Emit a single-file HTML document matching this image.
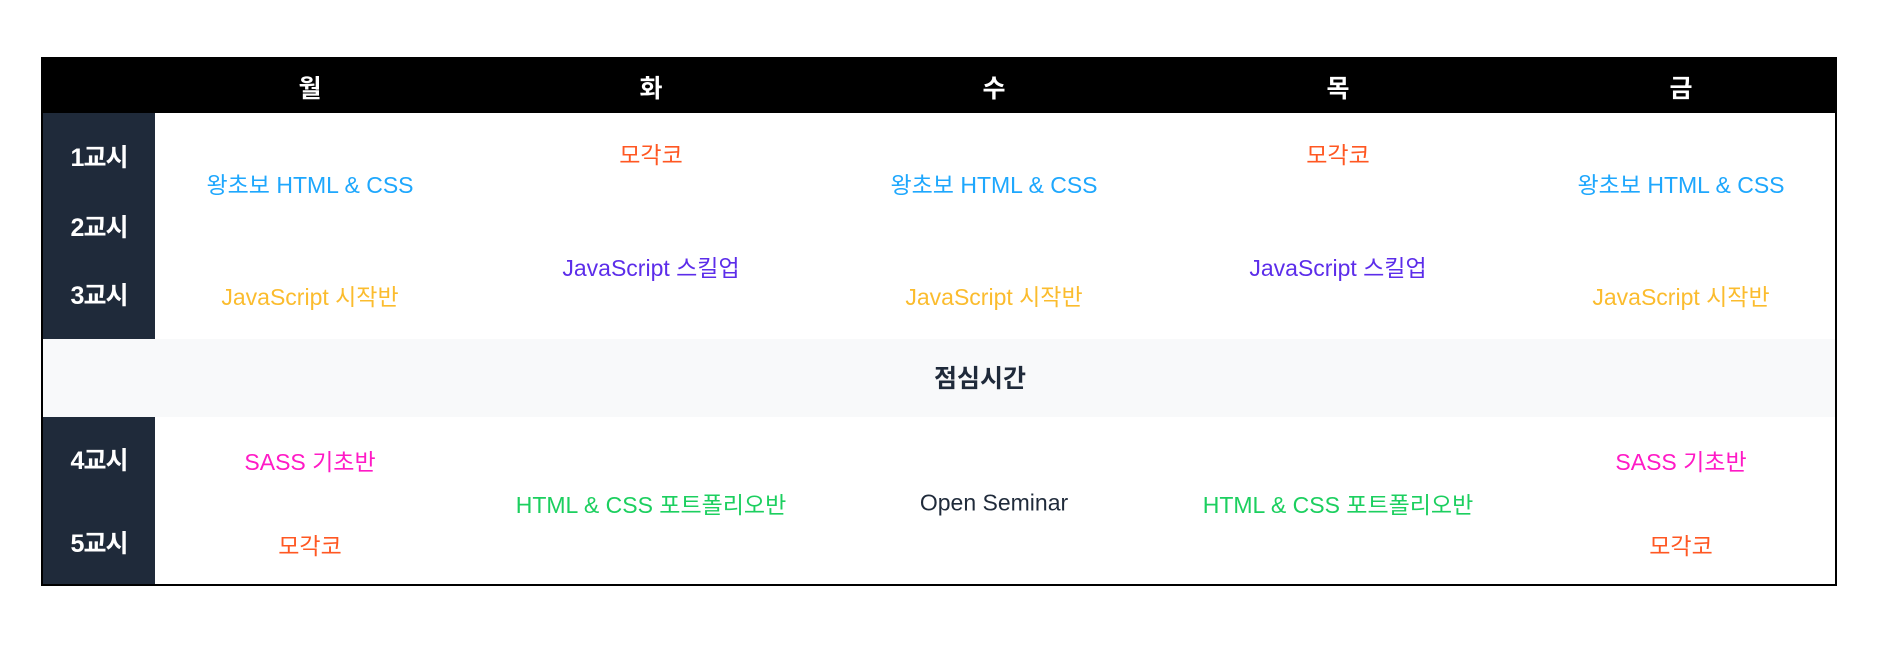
<!DOCTYPE html>
<html><head><meta charset="utf-8"><style>
body{margin:0;width:1880px;height:655px;background:#fff;position:relative;overflow:hidden;font-family:"Liberation Sans","Noto Sans CJK KR",sans-serif}
.box{position:absolute;left:41px;top:57px;width:1796px;height:529px;border:2px solid #000;box-sizing:border-box;background:#fff}
.hd{position:absolute;left:41px;top:57px;width:1796px;height:56px;background:#000}
.lab{position:absolute;left:43px;width:112px;background:#1f2a3a}
.lunch{position:absolute;left:43px;top:339px;width:1792px;height:78px;background:#f8f9fa}
.t{position:absolute;transform:translate(-50%,-50%);white-space:nowrap;font-size:23px}
.w{color:#fff;font-weight:bold;font-size:25px}
.l{color:#fff;font-weight:bold;font-size:25px;letter-spacing:-1px}
.b{color:#1ea7fd}.o{color:#ff5722}.p{color:#5c2dea}.y{color:#fbbc2e}.m{color:#ff1ac6}.g{color:#1ccf5f}.k{color:#1f2a3a}
</style></head><body>
<div class="box"></div>
<div class="hd"></div>
<div class="lab" style="top:113px;height:226px"></div>
<div class="lunch"></div>
<div class="lab" style="top:417px;height:167px"></div>

<div class="t w" style="left:310px;top:87px">월</div>
<div class="t w" style="left:651px;top:87px">화</div>
<div class="t w" style="left:994px;top:87px">수</div>
<div class="t w" style="left:1338px;top:87px">목</div>
<div class="t w" style="left:1681px;top:87px">금</div>

<div class="t l" style="left:99px;top:156px">1교시</div>
<div class="t l" style="left:99px;top:226px">2교시</div>
<div class="t l" style="left:99px;top:294px">3교시</div>
<div class="t l" style="left:99px;top:459px">4교시</div>
<div class="t l" style="left:99px;top:542px">5교시</div>

<div class="t b" style="left:310px;top:183px">왕초보 HTML &amp; CSS</div>
<div class="t y" style="left:310px;top:295px">JavaScript 시작반</div>
<div class="t o" style="left:651px;top:153px">모각코</div>
<div class="t p" style="left:651px;top:266px">JavaScript 스킬업</div>
<div class="t b" style="left:994px;top:183px">왕초보 HTML &amp; CSS</div>
<div class="t y" style="left:994px;top:295px">JavaScript 시작반</div>
<div class="t o" style="left:1338px;top:153px">모각코</div>
<div class="t p" style="left:1338px;top:266px">JavaScript 스킬업</div>
<div class="t b" style="left:1681px;top:183px">왕초보 HTML &amp; CSS</div>
<div class="t y" style="left:1681px;top:295px">JavaScript 시작반</div>

<div class="t k" style="left:980px;top:377px;font-weight:bold;font-size:25px">점심시간</div>

<div class="t m" style="left:310px;top:460px">SASS 기초반</div>
<div class="t o" style="left:310px;top:544px">모각코</div>
<div class="t g" style="left:651px;top:503px">HTML &amp; CSS 포트폴리오반</div>
<div class="t k" style="left:994px;top:503px">Open Seminar</div>
<div class="t g" style="left:1338px;top:503px">HTML &amp; CSS 포트폴리오반</div>
<div class="t m" style="left:1681px;top:460px">SASS 기초반</div>
<div class="t o" style="left:1681px;top:544px">모각코</div>
</body></html>
